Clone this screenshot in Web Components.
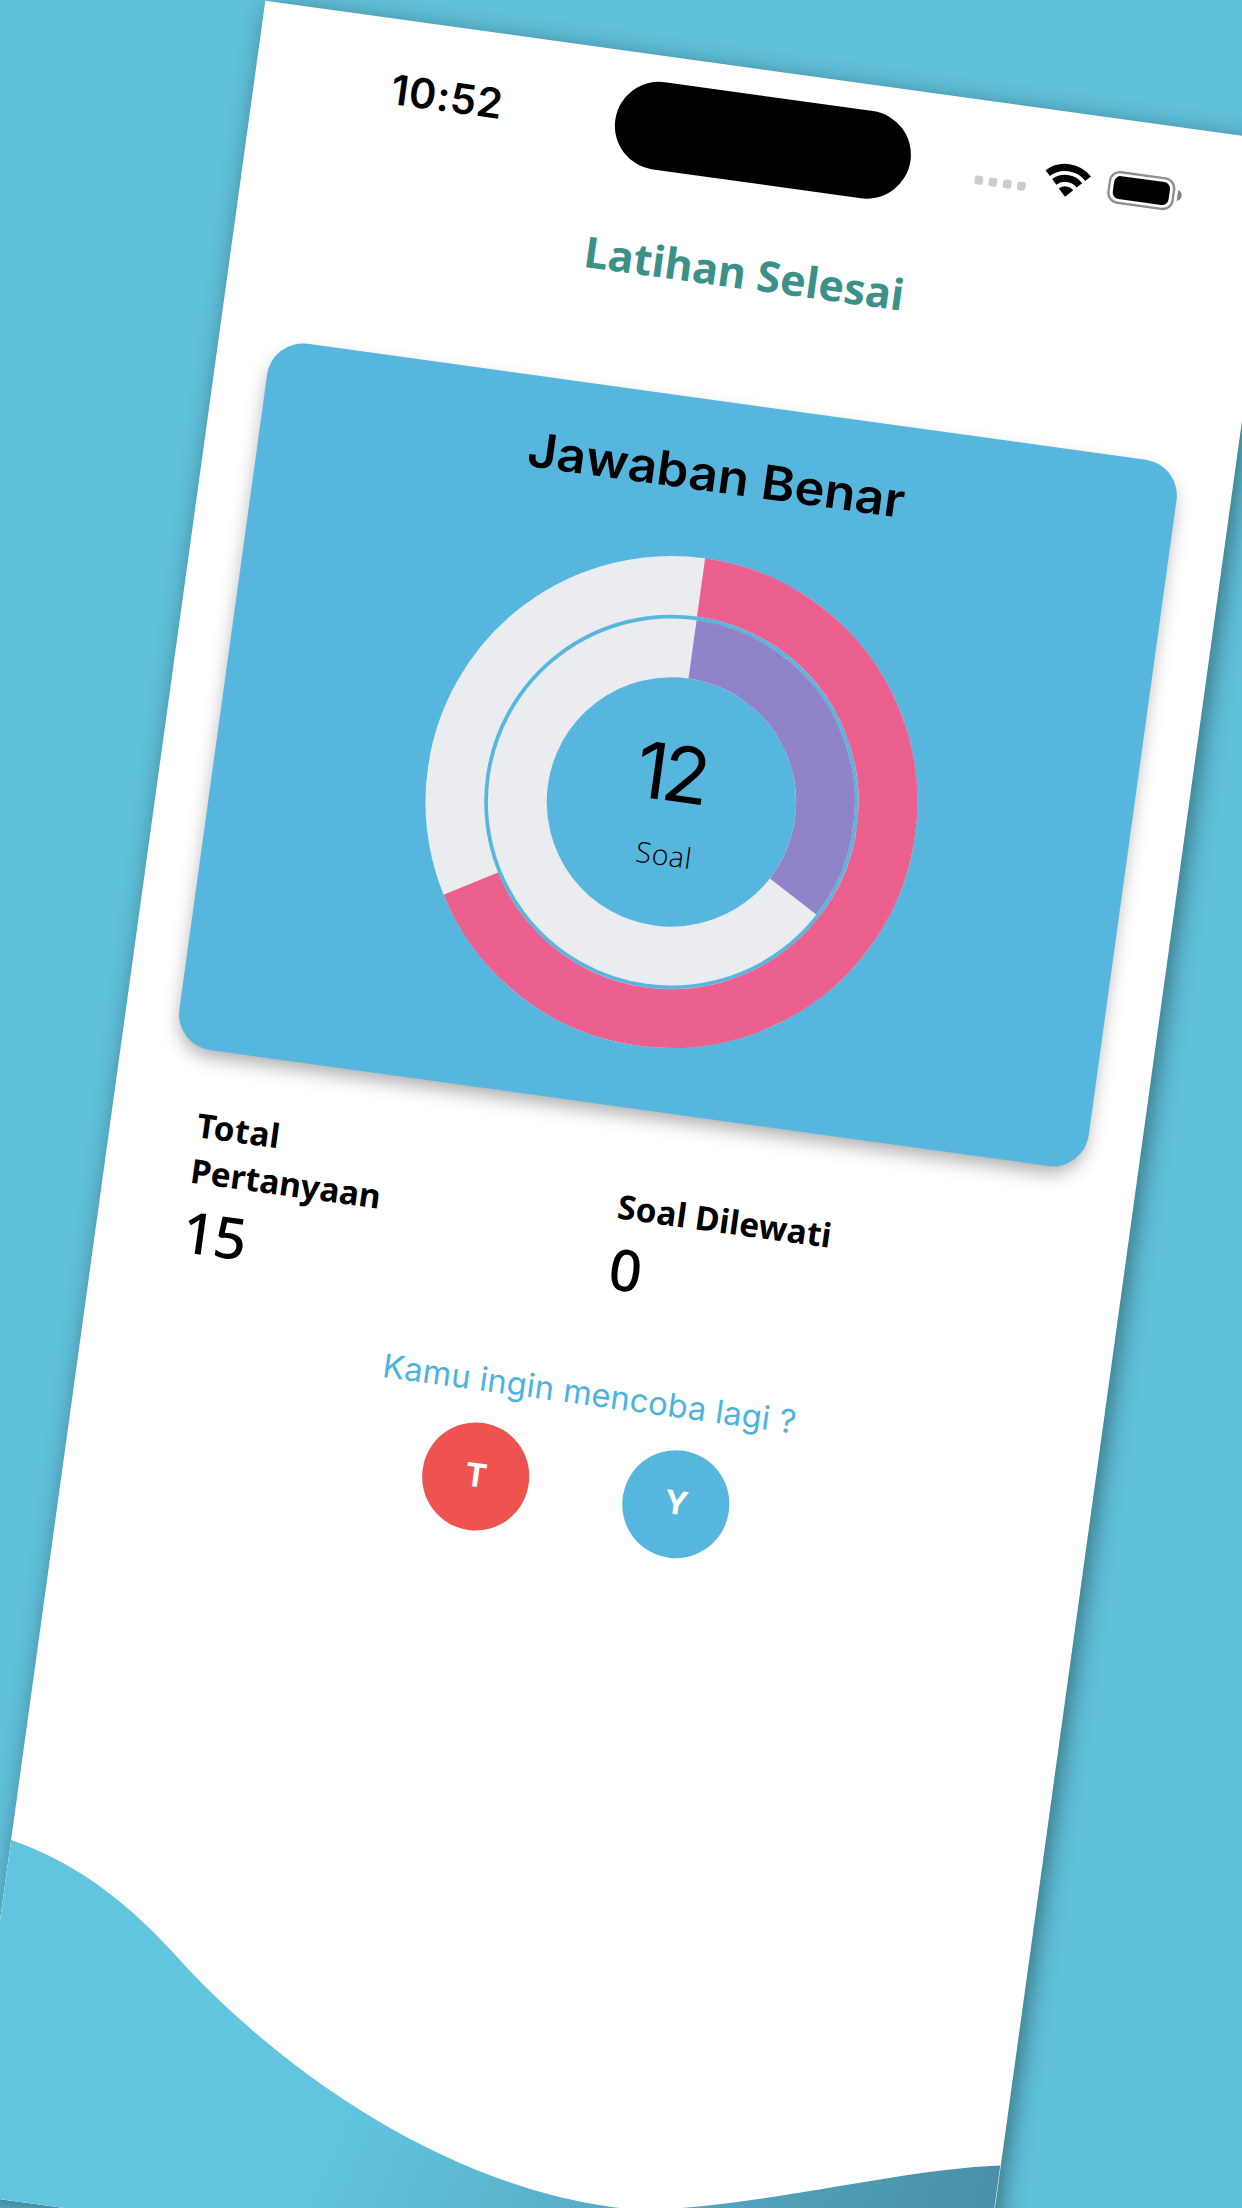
<!DOCTYPE html>
<html lang="id">
<head>
<meta charset="utf-8">
<title>Latihan Selesai</title>
<style>
html,body{margin:0;padding:0;width:1242px;height:2208px;overflow:hidden;background:#60c1db}
</style>
</head>
<body>
<promo-stage>
  <phone-screen>
    <status-bar time="10:52"></status-bar>
    <page-title>Latihan Selesai</page-title>
    <result-card heading="Jawaban Benar">
      <ring-chart value="12" label="Soal" outer="240" inner="120"></ring-chart>
    </result-card>
    <stats-row>
      <stat-item value="15" ink="58"><fit-text ink="81.6">Total</fit-text><fit-text ink="188">Pertanyaan</fit-text></stat-item>
      <stat-item value="0" ink="0"><fit-text ink="212.5">Soal Dilewati</fit-text></stat-item>
    </stats-row>
    <retry-prompt question="Kamu ingin mencoba lagi ?">
      <round-button style="--fill:#ef5350">T</round-button>
      <round-button style="--fill:#57b6dd">Y</round-button>
    </retry-prompt>
    <wave-footer></wave-footer>
  </phone-screen>
</promo-stage>
<script>
const define = (name, render, connected) => {
  customElements.define(name, class extends HTMLElement {
    constructor() { super(); this.attachShadow({ mode: 'open' }); }
    connectedCallback() {
      this.shadowRoot.innerHTML = render(this);
      if (connected) connected(this);
    }
  });
};

define('promo-stage', () => `
  <style>:host{display:block;width:1242px;height:2208px;overflow:hidden;background:#60c1db}</style>
  <slot></slot>`);

define('phone-screen', () => `
  <style>
    :host{display:flex;flex-direction:column;box-sizing:border-box;width:1024.5px;height:2213.7px;
      background:#fff;transform-origin:0 0;transform:translate(265.3px,.8px) rotate(7.87deg);
      box-shadow:5px 5px 25px rgba(0,0,0,.42);color:#000;font-family:"Noto Sans","Open Sans",sans-serif}
  </style><slot></slot>`);

define('status-bar', el => `
  <style>
    :host{display:grid;grid-template-columns:362.6px 298.6px 1fr;align-items:center;height:140px}
    .time{padding-left:137px;font:600 41.4px/50px Inter,sans-serif}
    .island{height:87.4px;border-radius:44px;background:#000}
    .icons{display:flex;align-items:center;padding:0 0 4px 65.8px;gap:17.8px}
    svg{display:block}
  </style>
  <div class="time"><fit-text ink="109.3">${el.getAttribute('time')}</fit-text></div>
  <div class="island"></div>
  <div class="icons">
    <svg width="51.6" height="34" viewBox="0 0 51.6 34" fill="#cbcbcb">
      <rect x="0" y="24.6" width="8.6" height="8.8" rx="2.6"/><rect x="14.3" y="24.6" width="8.6" height="8.8" rx="2.6"/>
      <rect x="28.7" y="24.6" width="8.6" height="8.8" rx="2.6"/><rect x="43" y="24.6" width="8.6" height="8.8" rx="2.6"/>
    </svg>
    <svg width="46" height="34" viewBox="-23 -33.6 46 34" fill="none" stroke="#000">
      <path stroke-width="7.2" d="M-20.4-21A29.3 29.3 0 0 1 20.4-21"/>
      <path stroke-width="7" d="M-12.7-13.3A18.4 18.4 0 0 1 12.7-13.3"/>
      <path fill="#000" stroke="none" d="M0 0L-7-7.2Q-7.2-7.6-6.8-8A10.6 10.6 0 0 1 6.8-8Q7.2-7.6 7-7.2Z"/>
    </svg>
    <svg width="76" height="34" viewBox="0 0 76 34">
      <rect x="1.3" y="1.6" width="64.8" height="30.8" rx="10" fill="none" stroke="#8f8f8f" stroke-width="2.4"/>
      <rect x="5.6" y="5.5" width="56.4" height="23" rx="6.5"/>
      <path d="M70.2 11.4q4.2 1.6 4.2 5.6t-4.2 5.6z" fill="#848484"/>
    </svg>
  </div>`);

define('page-title', el => `
  <style>:host{display:flex;justify-content:center;margin-top:34.9px;padding-right:1px;color:#3b9187;font-weight:700;font-size:42.9px;line-height:58.4px}</style>
  <fit-text ink="316.5">${el.textContent}</fit-text>`);

define('result-card', el => `
  <style>
    :host{display:flex;flex-direction:column;align-items:center;box-sizing:border-box;width:917.4px;height:713px;
      margin:101.2px auto 0 53.4px;padding-top:43.8px;border-radius:36px;background:#57b6dd;
      box-shadow:0 9px 19px -3px rgba(0,0,0,.34)}
    .heading{font:600 47.6px/60px Inter,sans-serif;margin-bottom:54.2px}
  </style>
  <div class="heading"><fit-text ink="378" stretch>${el.getAttribute('heading')}</fit-text></div>
  <slot></slot>`);

define('ring-chart', el => {
  const arc = (r, deg) => {
    const a = deg * Math.PI / 180;
    return `M246 ${246 - r}A${r} ${r} 0 ${deg > 180 ? 1 : 0} 1 ${246 + r * Math.sin(a)} ${246 - r * Math.cos(a)}`;
  };
  return `
  <style>
    :host{display:grid;width:492px;height:492px}
    svg,.label{grid-area:1/1}
    .label{display:flex;flex-direction:column;align-items:center;padding-top:176.8px}
    .value{font:420 77.5px/80px Inter,sans-serif;padding-right:4px;margin-bottom:22.2px}
    .unit{font:350 28.6px/39px "Open Sans","Noto Sans",sans-serif;padding-right:1px}
  </style>
  <svg width="492" height="492" viewBox="0 0 492 492" fill="none" stroke-width="58.8">
    <circle cx="246" cy="246" r="216.6" stroke="#eaecf0"/>
    <circle cx="246" cy="246" r="154.1" stroke="#eaecf0"/>
    <path d="${arc(216.6, +el.getAttribute('outer'))}" stroke="#eb608f"/>
    <path d="${arc(154.1, +el.getAttribute('inner'))}" stroke="#9183c8"/>
  </svg>
  <div class="label">
    <div class="value"><fit-text ink="65.5">${el.getAttribute('value')}</fit-text></div>
    <div class="unit"><fit-text ink="52.3">${el.getAttribute('label')}</fit-text></div>
  </div>`;
});

define('stats-row', () => `
  <style>:host{display:grid;grid-template-columns:428px 1fr;align-items:center;margin-top:53px;padding-left:86.4px}</style>
  <slot></slot>`);

define('stat-item', el => `
  <style>
    :host{display:block;font-weight:700;font-size:33.36px;line-height:45.4px}
    .value{font-weight:500;font-size:57.4px;line-height:77.9px}
  </style>
  <slot></slot>
  <div class="value"><fit-text ink="${el.getAttribute('ink')}">${el.getAttribute('value')}</fit-text></div>`);

define('retry-prompt', el => `
  <style>
    :host{display:flex;flex-direction:column;align-items:center;margin-top:45.4px;padding-right:1px}
    .question{font:400 32.6px/40px Inter,sans-serif;color:#4bb3dd}
    .actions{display:flex;gap:94.8px;margin-top:24.8px}
  </style>
  <div class="question"><fit-text ink="414">${el.getAttribute('question')}</fit-text></div>
  <div class="actions"><slot></slot></div>`);

define('round-button', () => `
  <style>
    :host{display:flex;align-items:center;justify-content:center;box-sizing:border-box;width:107.3px;height:107.3px;
      padding-bottom:2px;border-radius:50%;background:var(--fill);color:#fff;font:700 32.3px/40px Inter,sans-serif}
  </style><slot></slot>`);

define('wave-footer', () => `
  <style>:host{display:block;margin-top:auto}svg{display:block}</style>
  <svg width="1024.5" height="363.7" viewBox="0 1850 1024.5 363.7">
    <defs><linearGradient id="g" gradientUnits="userSpaceOnUse" x1="336" y1="2182" x2="940" y2="2356">
      <stop offset="0" stop-color="#62c4df"/><stop offset="1" stop-color="#4890a7"/></linearGradient></defs>
    <path d="M0 1856.7C62 1869 118 1898 175 1945.3C302 2053 480 2138 644 2138C744 2138 910 2063.5 1024.5 2043.6V2214H0Z" fill="url(#g)"/>
  </svg>`);

/* Makes the ink of a single line span the requested width, by tracking or by
   horizontal stretch. Defined last, so the inherited fonts are already in place. */
define('fit-text', () => `
  <style>:host{display:block;white-space:nowrap;width:max-content}</style><slot></slot>`,
  el => {
    const target = parseFloat(el.getAttribute('ink'));
    const text = el.textContent.trim();
    if (!target || text.length < 2) return;
    const cs = getComputedStyle(el);
    const ctx = document.createElement('canvas').getContext('2d');
    ctx.font = `${cs.fontWeight} ${cs.fontSize} ${cs.fontFamily}`;
    const m = ctx.measureText(text);
    const ink = m.actualBoundingBoxLeft + m.actualBoundingBoxRight;
    if (el.hasAttribute('stretch')) {
      el.style.transform = `scaleX(${(target / ink).toFixed(4)})`;
      return;
    }
    const ls = (target - ink) / (text.length - 1);
    el.style.letterSpacing = ls.toFixed(3) + 'px';
    el.style.marginRight = (-ls).toFixed(3) + 'px';
  });
</script>
</body>
</html>
